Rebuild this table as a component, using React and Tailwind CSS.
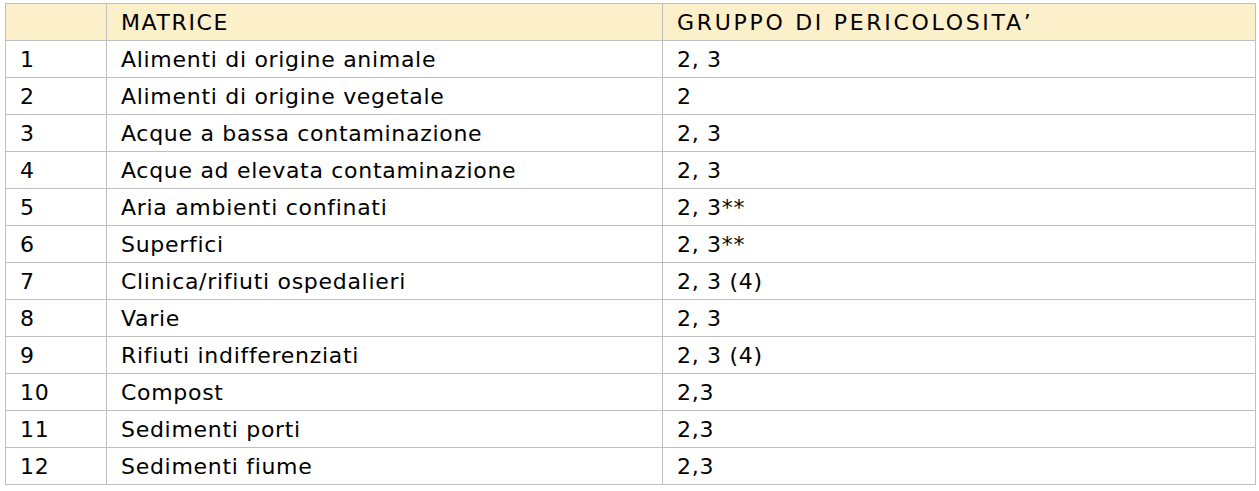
import React from 'react';

const ROWS = [
  ['1', 'Alimenti di origine animale', '2, 3'],
  ['2', 'Alimenti di origine vegetale', '2'],
  ['3', 'Acque a bassa contaminazione', '2, 3'],
  ['4', 'Acque ad elevata contaminazione', '2, 3'],
  ['5', 'Aria ambienti confinati', '2, 3**'],
  ['6', 'Superfici', '2, 3**'],
  ['7', 'Clinica/rifiuti ospedalieri', '2, 3 (4)'],
  ['8', 'Varie', '2, 3'],
  ['9', 'Rifiuti indifferenziati', '2, 3 (4)'],
  ['10', 'Compost', '2,3'],
  ['11', 'Sedimenti porti', '2,3'],
  ['12', 'Sedimenti fiume', '2,3'],
];

const cell = 'border border-[#bfbfbf] pl-[14px] h-[37px] align-middle whitespace-nowrap';

export default function App() {
  return (
    <div className="w-[1259px] h-[491px] bg-white pt-[3px] pl-[5px] font-['DejaVu_Sans',sans-serif] text-[22px] text-black tracking-[0.7px]">
      <table className="table-fixed border-collapse w-[1250px]">
        <colgroup>
          <col className="w-[101px]" />
          <col className="w-[556px]" />
          <col className="w-[593px]" />
        </colgroup>
        <thead>
          <tr className="bg-[#fcf0cb]">
            <th className={`${cell} font-normal text-left`}></th>
            <th className={`${cell} font-normal text-left tracking-[1.6px]`}>MATRICE</th>
            <th className={`${cell} font-normal text-left tracking-[2.7px]`}>GRUPPO DI PERICOLOSITA’</th>
          </tr>
        </thead>
        <tbody>
          {ROWS.map(([n, m, g]) => (
            <tr key={n}>
              <td className={cell}>{n}</td>
              <td className={cell}>{m}</td>
              <td className={cell}>{g}</td>
            </tr>
          ))}
        </tbody>
      </table>
    </div>
  );
}
